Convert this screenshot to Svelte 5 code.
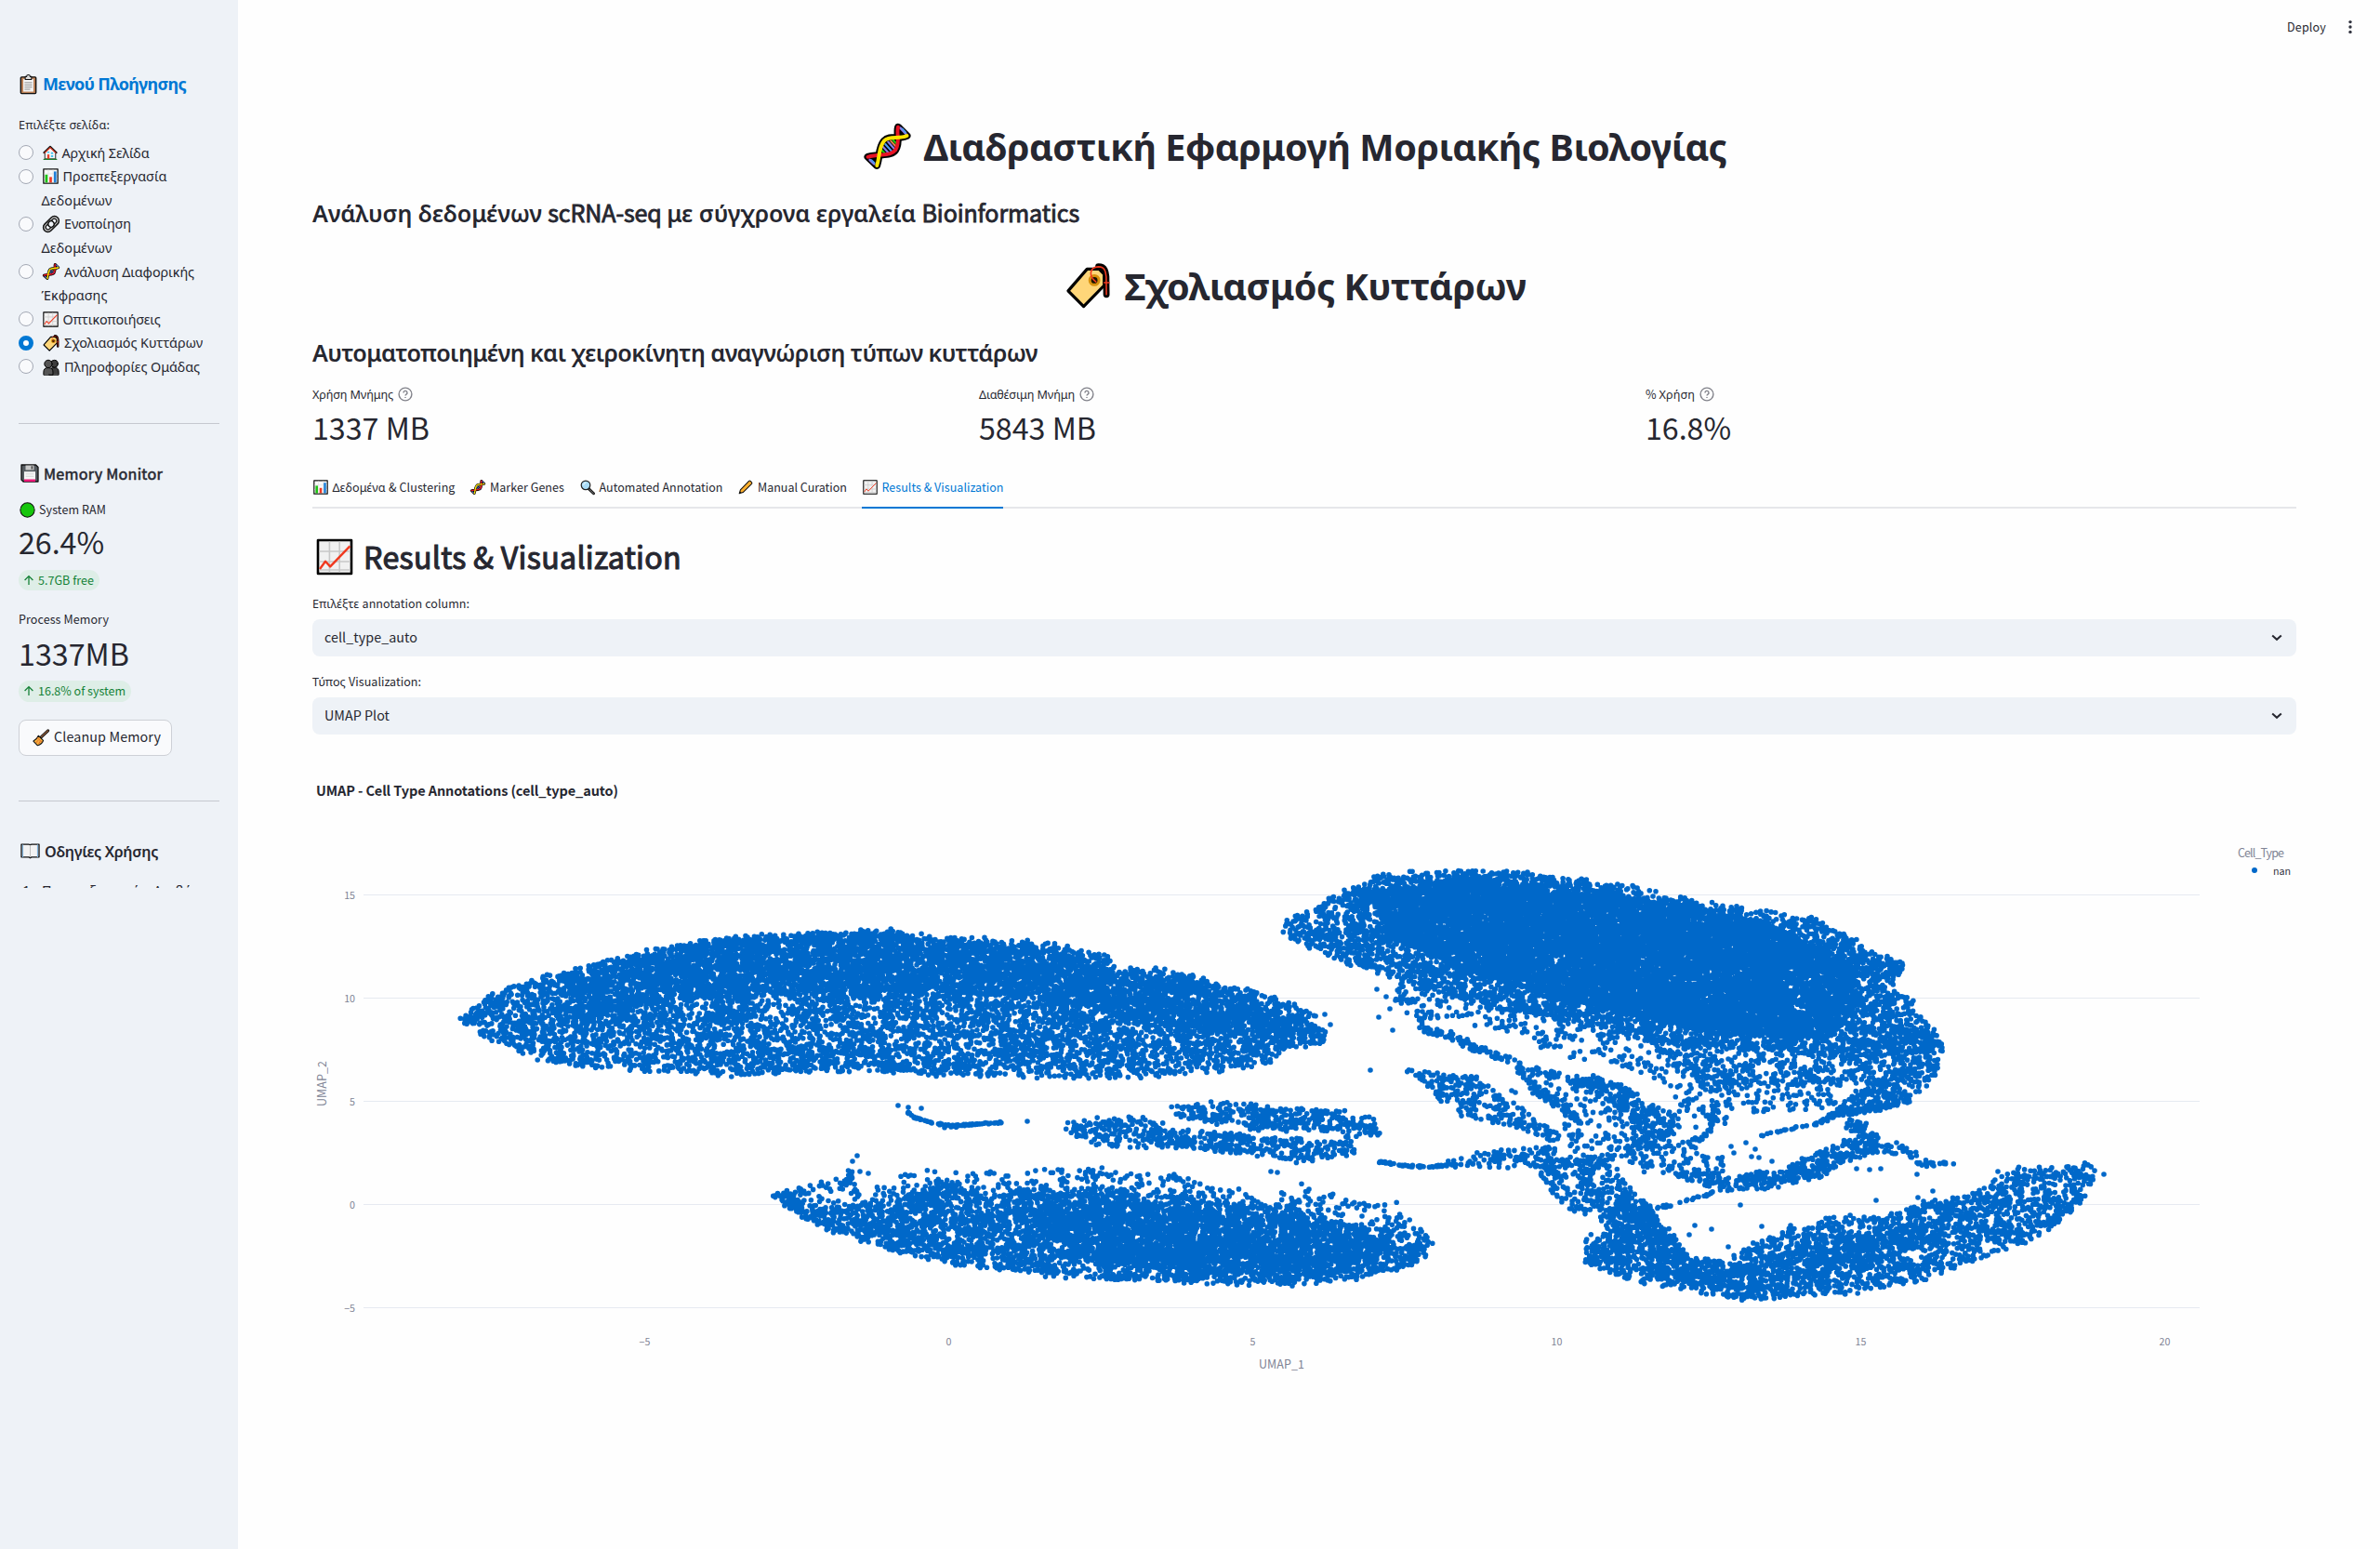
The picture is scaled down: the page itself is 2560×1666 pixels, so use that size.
<script>
  const runs = (s) => {
    const out = [];
    for (const ch of s) {
      const greek = /[\u0370-\u03ff\u1f00-\u1fff]/.test(ch);
      const last = out[out.length - 1];
      if (last && (last.greek === greek || ch === ' ')) last.text += ch;
      else out.push({ greek, text: ch });
    }
    return out;
  };

  // Tracks a line of text so that it fills the given width.
  function fit(node, width) {
    if (!width) return;
    const n = node.textContent.length;
    const w = node.getBoundingClientRect().width;
    node.style.letterSpacing = `${(width - w) / n}px`;
  }

  const pages = [
    { icon: 'house', lines: [['Αρχική Σελίδα', 94]] },
    { icon: 'bars', lines: [['Προεπεξεργασία', 112], ['Δεδομένων', 76]] },
    { icon: 'link', wide: true, lines: [['Ενοποίηση', 72], ['Δεδομένων', 76]] },
    { icon: 'dna', wide: true, lines: [['Ανάλυση Διαφορικής', 140], ['Έκφρασης', 71]] },
    { icon: 'trend', lines: [['Οπτικοποιήσεις', 105]] },
    { icon: 'tag', wide: true, lines: [['Σχολιασμός Κυττάρων', 149]], on: true },
    { icon: 'people', wide: true, lines: [['Πληροφορίες Ομάδας', 146]] }
  ];
  const metrics = [
    { label: 'Χρήση Μνήμης', lw: 87, value: '1337 MB', vw: 126 },
    { label: 'Διαθέσιμη Μνήμη', lw: 103, value: '5843 MB', vw: 126 },
    { label: '% Χρήση', lw: 53, value: '16.8%', vw: 92 }
  ];
  const tabs = [
    { icon: 'bars', label: 'Δεδομένα & Clustering', w: 132 },
    { icon: 'dna', label: 'Marker Genes', w: 80 },
    { icon: 'search', label: 'Automated Annotation', w: 133 },
    { icon: 'pencil', label: 'Manual Curation', w: 96 },
    { icon: 'trend', label: 'Results & Visualization', w: 131, on: true }
  ];
  const selects = [
    { label: 'Επιλέξτε annotation column:', lw: 169, value: 'cell_type_auto', vw: 100 },
    { label: 'Τύπος Visualization:', lw: 117, value: 'UMAP Plot', vw: 70 }
  ];

  // Scatter clusters: outline and points per square pixel.
  const clusters = [
    [0.1, '493,1096 531,1068 575,1053 661,1030 725,1017 770,1008 814,1006 859,1003 953,1000 1012,1007 1082,1012 1136,1015 1194,1029 1203,1041 1251,1043 1286,1048 1305,1057 1363,1070 1388,1078 1411,1090 1427,1107 1434,1124 1382,1127 1369,1142 1312,1152 1207,1159 1108,1158 1057,1157 1012,1156 936,1152 853,1153 789,1157 712,1152 642,1149 585,1142 527,1118'],
    [0.12, '600,1052 725,1019 850,1006 953,1004 1136,1020 1200,1045 1290,1055 1400,1095 1424,1115 1340,1115 1240,1098 1150,1080 1000,1065 850,1068 730,1075 620,1095'],
    [0.03, '829,1285 857,1277 900,1268 914,1255 930,1277 959,1275 969,1263 994,1257 1035,1260 1086,1260 1122,1257 1163,1257 1193,1257 1224,1264 1265,1263 1295,1275 1326,1277 1351,1290 1392,1273 1415,1271 1418,1283 1438,1283 1469,1290 1504,1293 1520,1310 1535,1330 1540,1338 1535,1353 1525,1360 1494,1365 1464,1375 1382,1382 1300,1380 1219,1377 1137,1373 1086,1368 1010,1357 984,1351 948,1340 902,1327 872,1314 857,1305'],
    [0.09, '829,1285 850,1282 870,1300 960,1292 1010,1268 1060,1285 1110,1278 1190,1280 1300,1290 1400,1300 1450,1316 1535,1330 1540,1338 1525,1360 1464,1375 1382,1382 1300,1380 1219,1377 1137,1373 1010,1357 948,1340 902,1327 857,1305'],
    [0.11, '1080,1300 1200,1290 1300,1300 1400,1312 1480,1325 1500,1350 1400,1368 1280,1370 1160,1350'],
    [0.1, '1142,1207 1173,1203 1249,1202 1252,1213 1275,1212 1295,1218 1331,1219 1356,1225 1392,1223 1413,1230 1453,1227 1458,1240 1418,1247 1392,1250 1362,1245 1290,1236 1234,1235 1183,1234 1160,1223 1142,1213'],
    [0.09, '1257,1188 1282,1190 1300,1186 1341,1188 1392,1191 1443,1195 1474,1202 1485,1213 1484,1221 1453,1227 1413,1215 1351,1215 1331,1208 1290,1208 1260,1198'],
    [0.08, '1556,1248 1615,1236 1674,1233 1674,1245 1620,1250 1567,1257'],
    [0.025, '1567,1252 1669,1242 1669,1257 1602,1258'],
    [0.11, '1377,998 1389,988 1411,978 1425,968 1462,950 1479,941 1522,938 1573,938 1627,936 1660,941 1690,945 1748,951 1796,963 1854,974 1908,981 1949,987 1985,1005 2017,1022 2048,1038 2036,1063 2058,1077 2058,1092 2080,1100 2091,1123 2070,1130 1990,1135 1917,1128 1845,1128 1772,1120 1728,1110 1675,1097 1602,1083 1530,1063 1481,1043 1452,1037 1413,1020 1384,1007'],
    [0.26, '1470,960 1560,946 1680,950 1790,970 1900,992 1990,1035 2000,1080 1970,1115 1850,1114 1740,1088 1640,1063 1560,1038 1500,1008'],
    [0.09, '1980,1125 2070,1110 2091,1123 2086,1150 2073,1170 2053,1183 2000,1195 1960,1205 1990,1180 2010,1160'],
    [0.055, '1770,1115 1990,1125 2010,1165 1980,1165 1900,1165 1860,1170 1800,1150'],
    [0.026, '1481,1043 1530,1058 1602,1078 1675,1093 1728,1105 1790,1130 1880,1160 1980,1160 1985,1192 1930,1195 1880,1200 1830,1215 1805,1200 1800,1170 1770,1155 1715,1140 1680,1135 1630,1115 1560,1095 1520,1100'],
    [0.09, '1511,1150 1535,1153 1551,1154 1594,1158 1605,1173 1631,1187 1658,1207 1685,1223 1674,1230 1647,1218 1572,1200 1567,1183 1548,1183 1530,1163'],
    [0.13, '1685,1160 1719,1158 1743,1167 1772,1187 1787,1190 1803,1200 1808,1217 1787,1233 1755,1237 1752,1203 1733,1187 1690,1170'],
    [0.025, '1640,1160 1690,1170 1735,1190 1752,1205 1750,1240 1690,1240 1680,1200 1650,1180'],
    [0.11, '1658,1248 1728,1240 1760,1230 1785,1228 1781,1238 1728,1248 1690,1255 1655,1257'],
    [0.075, '1653,1253 1685,1247 1701,1253 1733,1250 1744,1263 1752,1278 1771,1293 1784,1313 1733,1317 1712,1308 1690,1302 1664,1280'],
    [0.09, '1745,1278 1771,1293 1784,1313 1803,1330 1813,1347 1856,1358 1883,1338 1926,1322 1947,1320 1974,1307 2028,1307 2060,1298 2097,1288 2135,1277 2162,1257 2231,1256 2240,1252 2255,1255 2253,1270 2245,1287 2231,1300 2215,1318 2172,1338 2119,1358 2065,1378 1996,1390 1926,1395 1867,1397 1803,1387 1739,1373 1706,1357 1701,1333 1717,1322 1733,1317'],
    [0.08, '1760,1300 1782,1315 1815,1350 1860,1365 1930,1345 1990,1330 2080,1310 2100,1320 2050,1350 1960,1370 1870,1393 1780,1375 1720,1355 1745,1325'],
    [0.11, '1792,1258 1830,1258 1856,1266 1915,1257 1958,1238 1974,1230 2001,1223 2017,1220 2018,1240 1985,1248 1963,1264 1899,1278 1856,1282 1824,1274'],
    [0.035, '1749,1243 1790,1233 1830,1225 1856,1250 1856,1263 1792,1262 1755,1257']
  ].map(([density, pts]) => ({ density, poly: pts.split(' ').map((p) => p.split(',').map(Number)) }));

  // Thin trails: spread, points per pixel, line.
  const trails = [
    [1.5, 0.8, '975,1195 984,1202 1004,1208 1025,1211 1050,1209 1078,1207'],
    [2, 0.1, '1015,1212 1035,1213'],
    [2, 0.7, '1481,1249 1514,1254 1540,1255 1567,1252'],
    [7, 0.8, '1530,1108 1559,1113 1588,1128 1627,1140 1646,1163 1656,1177 1680,1188 1702,1210'],
    [10, 0.8, '1646,1152 1676,1158'],
    [8, 0.4, '1512,1070 1520,1080 1530,1108'],
    [2, 0.3, '1894,1222 1930,1213 1958,1208'],
    [5, 0.9, '1958,1207 1974,1198 2015,1193 2055,1183'],
    [8, 0.5, '1846,1190 1840,1215 1815,1232'],
    [12, 1.2, '1985,1208 2005,1213 2015,1225'],
    [10, 0.6, '2022,1236 2049,1237 2065,1250 2085,1250'],
    [3, 0.3, '2085,1250 2105,1254'],
    [3, 0.35, '1781,1300 1808,1294 1843,1282'],
    [8, 0.6, '915,1262 905,1278']
  ].map(([spread, rate, pts]) => ({ spread, rate, line: pts.split(' ').map((p) => p.split(',').map(Number)) }));

  const strays = '966,1189 977,1191 991,1192 1105,1206 922,1243 917,1249 925,1260 934,1262 1367,1260 1374,1261 1425,1091 1431,1102 1474,1151 1872,1296 2018,1291 2040,1229 2079,1281 2063,1288 2069,1292 1823,1318 1841,1322 1895,1319 1926,1318 1817,1328 1859,1341 2263,1263 2149,1260 2144,1271 1997,1257 2011,1258 2023,1257 1862,1233 1865,1240 1878,1229 1888,1236 1884,1244 1892,1245 1906,1249 1481,1064 1491,1072 1501,1076 1495,1085 1483,1094 1498,1108 1626,1173 1630,1175 2062,1263 2080,1254'
    .split(' ')
    .map((p) => p.split(',').map(Number));

  function scatter() {
    let seed = 20240;
    const rnd = () => {
      seed = (seed * 1664525 + 1013904223) % 4294967296;
      return seed / 4294967296;
    };
    const seen = new Map();
    const out = [];
    const put = (x, y, gap) => {
      const cx = Math.floor(x / 4);
      const cy = Math.floor(y / 4);
      for (let i = -1; i <= 1; i++)
        for (let j = -1; j <= 1; j++)
          for (const q of seen.get((cx + i) * 1000 + cy + j) ?? [])
            if (Math.hypot(q[0] - x, q[1] - y) < gap) return;
      const key = cx * 1000 + cy;
      if (!seen.has(key)) seen.set(key, []);
      seen.get(key).push([x, y]);
      out.push(`M${x.toFixed(1)} ${y.toFixed(1)}h0`);
    };
    const inside = (poly, x, y) => {
      let hit = false;
      for (let i = 0, j = poly.length - 1; i < poly.length; j = i++) {
        const [xi, yi] = poly[i];
        const [xj, yj] = poly[j];
        if (yi > y !== yj > y && x < ((xj - xi) * (y - yi)) / (yj - yi) + xi) hit = !hit;
      }
      return hit;
    };
    // Slow ripple that thins the clusters unevenly.
    const ripple = (x, y) => 0.78 + 0.3 * Math.sin(x * 0.13 + 2 * Math.sin(y * 0.11)) * Math.sin(y * 0.19 + 2 * Math.sin(x * 0.06));
    for (const p of strays) put(p[0], p[1], 0);
    for (const { density, poly } of clusters) {
      const xs = poly.map((p) => p[0]);
      const ys = poly.map((p) => p[1]);
      const x0 = Math.min(...xs);
      const y0 = Math.min(...ys);
      const w = Math.max(...xs) - x0;
      const h = Math.max(...ys) - y0;
      for (let i = 0; i < w * h * density; i++) {
        const x = x0 + rnd() * w;
        const y = y0 + rnd() * h;
        if (inside(poly, x, y) && rnd() < ripple(x, y)) put(x + (rnd() - 0.5) * 4, y + (rnd() - 0.5) * 4, 1.5);
      }
    }
    for (const { spread, rate, line } of trails)
      for (let i = 1; i < line.length; i++) {
        const [ax, ay] = line[i - 1];
        const [bx, by] = line[i];
        const n = Math.hypot(bx - ax, by - ay) * rate;
        for (let k = 0; k < n; k++) {
          const t = rnd();
          put(ax + (bx - ax) * t + (rnd() - 0.5) * spread, ay + (by - ay) * t + (rnd() - 0.5) * spread, 0.6);
        }
      }
    return out.join('');
  }
  const dots = scatter();

  const yTicks = [15, 10, 5, 0, -5].map((v) => ({ v, y: 1295.5 - v * 22.2 }));
  const xTicks = [-5, 0, 5, 10, 15, 20].map((v) => ({ v, x: 1020.4 + v * 65.4 }));
  const num = (v) => String(v).replace('-', '−');
</script>

{#snippet t(s, w)}<span class="t" use:fit={w}>{#each runs(s) as r}<span class={r.greek ? 'gr' : 'la'}>{r.text}</span>{/each}</span>{/snippet}

{#snippet icon(name)}
  <svg class="ico {name}" viewBox="0 0 20 20" fill="none" stroke-linejoin="round" stroke-linecap="round">
    {#if name === 'clipboard'}
      <rect x="2.2" y="2.2" width="15.6" height="17" rx="1" fill="#b97f55" stroke="#111" stroke-width="1.3" />
      <path d="M4.8 4.2h10.4v13H4.8z" fill="#f4f4f4" />
      <path d="M6.8 1.8h1.4a1.8 1.8 0 0 1 3.6 0h1.4v3H6.8z" fill="#ddd" stroke="#111" />
      <path d="M6.5 8h7M6.5 10.3h7M6.5 12.6h7M6.5 14.8h5" stroke="#888" stroke-width=".9" />
    {:else if name === 'house'}
      <path d="M2.8 9.5V18h14.4V9.5L10 2.2z" fill="#f5f5f5" stroke="#222" stroke-width="1.2" />
      <path d="M1.6 9.6 10 1.600l8.400 8" stroke="#111" stroke-width="2.4" />
      <path d="M2.600 9.800 10 2.800l7.400 7" stroke="#e8402a" stroke-width="1.4" />
      <path d="M6 12h3v6H6z" fill="#e8402a" />
      <path d="M11 9h3v2.500h-3zM11 13h3v2.500h-3zM6 8h3v2H6z" fill="#45c4f0" />
      <path d="M1.500 18.700h17" stroke="#1d7a2a" stroke-width="1.6" />
    {:else if name === 'bars'}
      <rect x="1" y="1" width="18" height="18" fill="#fafafa" stroke="#111" stroke-width="1.5" />
      <path d="M7 2v16M13 2v16M2 7h16M2 13h16" stroke="#ddd" stroke-width=".7" />
      <path d="M3 8h3.2v10H3z" fill="#18c30e" /><path d="M8.4 11h3.2v7H8.4z" fill="#f03a25" /><path d="M14 4h3.2v14H14z" fill="#1f80d8" />
    {:else if name === 'trend'}
      <rect x="1" y="1" width="18" height="18" fill="#f1f1f1" stroke="#000" stroke-width="1.3" />
      <path d="M7.2 2v16M12.6 2v16M2 7h16M2 12.5h16M2 17h16" stroke="#c8c8c8" stroke-width=".8" />
      <path d="M2 16.5 5 12.400l2.600 2.800L18.200 4.200" stroke="#f0391f" stroke-width="1.2" stroke-linecap="butt" />
    {:else if name === 'link'}
      <g transform="rotate(-45 10 10)">
        <rect x="-1" y="4.6" width="22" height="10.8" rx="5.4" fill="#ccc" stroke="#111" stroke-width="1.6" />
        <rect x="2" y="7.3" width="16" height="5.4" rx="2.7" fill="#eef2f7" stroke="#111" stroke-width="1.4" />
        <circle cx="10" cy="10" r="3.6" fill="#eef2f7" stroke="#111" stroke-width="1.6" />
      </g>
    {:else if name === 'dna'}
      <path d="M14.700 1.500 18.600 5.300C15 7 11 5 8.600 7.500 6 10.500 6.800 14 5.400 18.400L1.400 14.600C7 13 11.500 14.500 13.600 11.500 15.800 8 13.800 4.500 14.700 1.500z" fill="#000" stroke="#000" stroke-width="3.2" />
      <path d="m15.700 1.900 2.400 2.500M2.300 15.900 4.200 17.700" stroke="#8a7be6" stroke-width="1.1" />
      <path d="m16.600 2.300 1.400 1.500M3 16l1.300 1.200" stroke="#4a9bf0" stroke-width=".8" />
      <path d="m7.900 10 3 3.300M10.300 8l3.400 3.800" stroke="#8a7be6" stroke-width=".9" />
      <path d="m9.100 9 3.300 3.700" stroke="#4a9bf0" stroke-width=".9" /><path d="m11.500 7.600 2.500 2.700" stroke="#e8804a" stroke-width=".8" />
      <path d="m7.300 11.400 1.600 1.700M12.500 7.200l1.400 1.500" stroke="#16c60c" stroke-width=".9" />
      <path d="M14.700 1.500C13.800 4.500 15.800 8 13.600 11.500 11.500 14.500 7 13 1.400 14.600" stroke="#e81224" stroke-width="1.6" />
      <path d="M18.600 5.300C15 7 11 5 8.600 7.500 6 10.500 6.800 14 5.400 18.400" stroke="#fde300" stroke-width="1.6" />
    {:else if name === 'tag'}
      <path d="M14.500 1.500c3 0 3.200 2.500 3.400 4.500l.1 7.800" stroke="#000" stroke-width="2.8" />
      <path d="M12 2.200 14.500.8l3.600 2.400.600 6h-2z" fill="#000" />
      <path d="M9.500 2.600h5.300l2.200 2.200v5L8 19 1.200 12.200z" fill="#ffd679" stroke="#000" stroke-width="1.3" />
      <circle cx="12.700" cy="7.500" r="2" fill="#1a1200" stroke="#d8910c" stroke-width="1.2" />
      <path d="M13.400 8.200C9.800 5.500 10.800 1.700 14.500 1.600c3 0 3.200 2.400 3.400 4.400l.1 7.800M17 8.600h2.200" stroke="#f0391f" stroke-width=".65" />
    {:else if name === 'people'}
      <g fill="#3c3c3c" stroke="#000" stroke-width="1.1"><path d="M7.5 18.7v-3c0-3.2 1.8-5 4.8-5h3c2.600 0 3.700 1.800 3.700 5v3z" /><circle cx="13.8" cy="5.800" r="4.300" /><path d="M1 18.700v-3c0-3.200 1.600-5 4.600-5h1.800c3.200 0 4.800 1.800 4.800 5v3z" fill="#555" /><circle cx="6.6" cy="6" r="4.6" fill="#555" /></g>
    {:else if name === 'floppy'}
      <path d="M1 1h15.5L19 3.5V19H3l-2-2z" fill="#555b60" stroke="#111" stroke-width="1.3" />
      <path d="M4 8.2h12v9.6H4z" fill="#f7f7f7" /><path d="M4 16.5h12V19H4z" fill="#ec1777" />
      <path d="M5.5 1.5h9v5h-9z" fill="#c9c9c9" /><path d="M11.6 2.3h1.6v3.2h-1.6z" fill="#444" />
      <path d="M6 10.8h8M6 13.3h8" stroke="#ccc" stroke-width=".7" />
    {:else if name === 'green'}
      <circle cx="10" cy="10" r="9" fill="#16c60c" stroke="#111" stroke-width="1.2" />
    {:else if name === 'broom'}
      <path d="M18.5 1.5 10.5 9" stroke="#111" stroke-width="3.4" /><path d="M18.5 1.5 10.5 9" stroke="#8b5a3a" stroke-width="1.5" />
      <path d="m7 7.5 5.8 5.8c-1 3-3.500 5-6.800 5.900L1 14c1.800-.8 4.400-3 6-6.500z" fill="#f7b13c" stroke="#111" stroke-width="1.2" />
      <path d="m5.800 10 5 5M4.500 15.800l2-2.500M7.500 17l1.500-2.500" stroke="#e0632c" stroke-width="1.1" />
    {:else if name === 'book'}
      <path d="M0 2.200h8.200c1 0 1.800.5 1.800 1 0-.5.8-1 1.800-1H20v14.500h-8.500l-1.500 1-1.500-1H0z" fill="#f3f3f3" stroke="#111" stroke-width="1.4" />
      <path d="M1.600 3v13.200M18.400 3v13.200" stroke="#7fb2dc" stroke-width="1.2" /><path d="M10 3.500v13" stroke="#bbb" />
    {:else if name === 'search'}
      <path d="m11.500 12 6.700 6.500" stroke="#111" stroke-width="3.6" /><path d="m12.500 13 5.500 5.300" stroke="#666" stroke-width="1.3" />
      <circle cx="7.5" cy="7.3" r="6" fill="#a9dcf8" stroke="#222" stroke-width="1.5" /><path d="M4.500 7a3.500 3.500 0 0 1 3-3.200" stroke="#fff" />
    {:else if name === 'pencil'}
      <path d="m1.500 18.500 1.500-5L14.500 1.800a1.500 1.500 0 0 1 2 0l1.700 1.700a1.500 1.500 0 0 1 0 2L6.500 17z" fill="#ffb02e" stroke="#111" stroke-width="1.3" />
      <path d="m1.800 18.200.8-2.600 1.800 1.700z" fill="#111" />
    {/if}
  </svg>
{/snippet}

{#snippet delta(s, w)}
  <div class="pill">
    <svg viewBox="0 0 12 12" fill="none" stroke="currentColor" stroke-width="1.3"><path d="M6 11V1.800M1.600 6 6 1.600 10.400 6" /></svg>
    {@render t(s, w)}
  </div>
{/snippet}

<div class="app">
  <aside>
    <h2 class="menu">{@render icon('clipboard')}{@render t('Μενού Πλοήγησης', 154)}</h2>
    <div class="small pick">{@render t('Επιλέξτε σελίδα:', 98)}</div>
    <ul>
      {#each pages as p}
        <li>
          <i class="radio" class:on={p.on}></i>
          <div>
            {#each p.lines as [line, width], i}
              <div class="row" class:wide={p.wide}>{#if i === 0}{@render icon(p.icon)}{/if}{@render t(line, width)}</div>
            {/each}
          </div>
        </li>
      {/each}
    </ul>
    <hr />
    <h3>{@render icon('floppy')}{@render t('Memory Monitor', 128)}</h3>
    <div class="small ram">{@render icon('green')}{@render t('System RAM', 72)}</div>
    <div class="big first">{@render t('26.4%', 92)}</div>
    {@render delta('5.7GB free', 60)}
    <div class="small proc">{@render t('Process Memory', 97)}</div>
    <div class="big third">{@render t('1337MB', 119)}</div>
    {@render delta('16.8% of system', 94)}
    <button>{@render icon('broom')}{@render t('Cleanup Memory', 115)}</button>
    <hr class="after" />
    <h3 class="guide">{@render icon('book')}{@render t('Οδηγίες Χρήσης', 122)}</h3>
    <ol><li><b>1.</b>{@render t('Προεπεξεργασία: Ανεβάστε', 184)}</li></ol>
  </aside>

  <main>
    <header>
      {@render t('Deploy', 42)}
      <svg width="6" height="18" viewBox="0 0 6 18" fill="#31333f"><circle cx="3" cy="3.6" r="1.7" /><circle cx="3" cy="9" r="1.7" /><circle cx="3" cy="14.4" r="1.7" /></svg>
    </header>
    <h1>{@render icon('dna')}{@render t('Διαδραστική Εφαρμογή Μοριακής Βιολογίας', 864)}</h1>
    <h4>{@render t('Ανάλυση δεδομένων scRNA-seq με σύγχρονα εργαλεία Bioinformatics', 825)}</h4>
    <h1 class="sub">{@render icon('tag')}{@render t('Σχολιασμός Κυττάρων', 432)}</h1>
    <h4>{@render t('Αυτοματοποιημένη και χειροκίνητη αναγνώριση τύπων κυττάρων', 780)}</h4>

    <section class="metrics">
      {#each metrics as m}
        <div>
          <div class="small help">
            {@render t(m.label, m.lw)}
            <svg width="16" height="16" viewBox="0 0 16 16" fill="none" stroke="#808189" stroke-width="1.4"><circle cx="8" cy="8" r="6.9" /><path d="M6 6.500a2 2 0 1 1 3 1.600c-.7.4-1 .7-1 1.400" /><path d="M8 10.900v1.200" /></svg>
          </div>
          <div class="big second">{@render t(m.value, m.vw)}</div>
        </div>
      {/each}
    </section>

    <nav>
      {#each tabs as tab}
        <div class="tab small" class:on={tab.on}>{@render icon(tab.icon)}{@render t(tab.label, tab.w)}</div>
      {/each}
    </nav>

    <h2 class="results">{@render icon('trend')}{@render t('Results & Visualization', 342)}</h2>

    {#each selects as s}
      <div class="small label">{@render t(s.label, s.lw)}</div>
      <div class="select">
        {@render t(s.value, s.vw)}
        <svg width="12" height="8" viewBox="0 0 12 8" fill="none" stroke="#262730" stroke-width="2"><path d="m1.200 1.500 4.800 4.300 4.800-4.300" /></svg>
      </div>
    {/each}

    <svg class="chart" viewBox="336 806 2134 700" width="2134" height="700">
      <text class="title" x="340" y="856" textLength="325">UMAP - Cell Type Annotations (cell_type_auto)</text>
      {#each yTicks as k}
        <path class="grid" d="M391 {k.y}H2366" />
        <text class="tick" x="382" y={k.y + 4.5} text-anchor="end">{num(k.v)}</text>
      {/each}
      {#each xTicks as k}
        <text class="tick" x={k.x} y="1446.5" text-anchor="middle">{num(k.v)}</text>
      {/each}
      <text class="axis" x="1354" y="1472" textLength="49">UMAP_1</text>
      <text class="axis" transform="translate(350.5 1190) rotate(-90)" textLength="49">UMAP_2</text>
      <path class="dots" d={dots} />
      <text class="axis" x="2407" y="922" textLength="50">Cell_Type</text>
      <circle cx="2425" cy="936" r="3" fill="#0068c9" />
      <text class="tick key" x="2445" y="941" textLength="19">nan</text>
    </svg>
  </main>
</div>

<style>
  :global(body) { margin: 0; background: #fefefe; }
  .app { display: flex; width: 2560px; height: 1666px; overflow: hidden; color: #262730; font: 400 16px/25.6px 'Noto Sans', sans-serif; }
  h1, h2, h3, h4, ul, ol { margin: 0; padding: 0; list-style: none; }
  .t { white-space: pre; flex: none; }
  .la { font-family: 'Noto Sans CJK SC', 'Noto Sans', sans-serif; font-size: 0.895em; line-height: 0; }
  .gr { font-family: 'Noto Sans', sans-serif; font-size: 0.9em; line-height: 0; }
  /* Semibold Latin, between the family's regular and bold cuts */
  h3 .la, h4 .la, .results .la { font-weight: 400; -webkit-text-stroke: 0.034em currentColor; }
  .ico { width: 1.1em; height: 1.1em; flex: none; overflow: visible; }
  .small { font-size: 14px; line-height: 20px; }
  .big { font-size: 36px; line-height: 46px; }
  .first { margin-top: 2px; }
  .second { margin-top: 3px; }
  .third { margin-top: 3.5px; }

  aside { box-sizing: border-box; width: 256px; flex: none; padding: 78px 20px 0; background: #eef2f7; }
  .menu { display: flex; align-items: center; gap: 5px; font-size: 20px; line-height: 24px; font-weight: 700; color: #0078d4; }
  .menu .ico { width: 21px; height: 22px; margin-top: 1px; }
  .pick { margin-top: 21.6px; }
  ul { margin-top: 8px; }
  ul li { display: flex; gap: 8.5px; }
  .row { display: flex; align-items: center; gap: 5px; height: 25.6px; }
  .row .ico { width: 17px; height: 17px; margin-left: 1px; }
  .row .house { width: 16px; }
  .wide .ico { width: 18px; height: 18px; margin-left: 1.5px; }
  .radio { box-sizing: border-box; width: 16px; height: 16px; margin-top: 4.5px; border: 1px solid #a3a8b4; border-radius: 50%; background: #f9fafc; }
  .radio.on { border: 5px solid #0078d4; background: #fff; }
  hr { height: 1px; margin: 47.4px 0 0; border: 0; background: #c5c8cf; }
  h3 { display: flex; align-items: center; gap: 5px; margin-top: 40.7px; padding-left: 2px; font-size: 18px; line-height: 24px; font-weight: 600; }
  h3 .ico { width: 20px; height: 20px; }
  .ram { display: flex; align-items: center; gap: 4px; margin-top: 17.6px; padding-left: 1px; }
  .ram .ico { width: 17px; height: 17px; }
  .pill { display: flex; align-items: center; gap: 4px; box-sizing: border-box; width: max-content; height: 22.5px; margin-top: 6.5px; padding: 0 6px 0 5px; border-radius: 12px; background: #deeee7; color: #158237; font-size: 14px; line-height: 22px; }
  .pill svg { width: 12px; height: 12px; }
  .proc { margin-top: 21px; }
  button { display: flex; align-items: center; gap: 5px; height: 39px; margin-top: 19px; padding: 0 11px 0 14px; border: 1px solid #cdd0d6; border-radius: 8px; background: #f9fafc; color: inherit; font: inherit; }
  button .ico { width: 18px; height: 19px; }
  .after { margin-top: 48px; }
  .guide { margin-top: 41.5px; }
  .guide .ico { width: 21px; height: 19px; }
  ol { height: 10px; margin-top: 18px; overflow: hidden; }
  ol li { display: flex; gap: 9px; padding-left: 4px; }
  b { width: 12px; font-weight: 400; font-size: 15px; }

  main { box-sizing: border-box; width: 2304px; padding: 0 90px 0 80px; }
  header { display: flex; align-items: center; justify-content: flex-end; gap: 23px; height: 58px; margin-right: -61px; font-size: 14px; line-height: 20px; }
  h1 { display: flex; align-items: center; justify-content: center; gap: 15px; margin-top: 71.5px; padding-right: 19px; font-size: 44px; line-height: 53px; font-weight: 700; }
  h1.sub { margin-top: 34.5px; }
  h1 .ico { width: 49px; height: 49px; margin-top: 3px; }
  h4 { margin-top: 28.5px; font-size: 28px; line-height: 34px; font-weight: 600; }
  .metrics { display: grid; grid-template-columns: 717px 717px 1fr; margin-top: 18.8px; }
  .help { display: flex; align-items: center; gap: 5px; }
  nav { display: flex; gap: 16px; margin-top: 31px; height: 31.4px; border-bottom: 2px solid #e6e7ea; }
  .tab { display: flex; align-items: flex-start; gap: 4px; height: 31.4px; }
  .tab .ico { width: 16px; height: 16px; margin-top: 2px; margin-left: 1px; margin-right: 0.5px; }
  .tab.on { color: #0078d4; border-bottom: 2px solid #0078d4; }
  .results { display: flex; align-items: center; gap: 11px; margin-top: 30px; padding-left: 4px; font-size: 36px; line-height: 44px; font-weight: 600; }
  .results .ico { width: 40px; height: 40px; }
  .label { margin-top: 17px; }
  .results + .label { margin-top: 17.6px; }
  .select { display: flex; align-items: center; justify-content: space-between; height: 40px; margin-top: 7px; padding: 0 15px 0 13px; border-radius: 8px; background: #eef2f7; }
  .chart { display: block; margin-top: 16px; font-family: 'Noto Sans CJK SC', sans-serif; }
  .title { font-size: 14.5px; font-weight: 700; fill: #262730; }
  .tick { font-size: 10.7px; fill: #808495; }
  .key { fill: #31333f; }
  .axis { font-size: 12.5px; fill: #808495; }
  .grid { stroke: #e6eaf1; stroke-width: 1; }
  .dots { fill: none; stroke: #0068c9; stroke-width: 5.6px; stroke-linecap: round; }
</style>
